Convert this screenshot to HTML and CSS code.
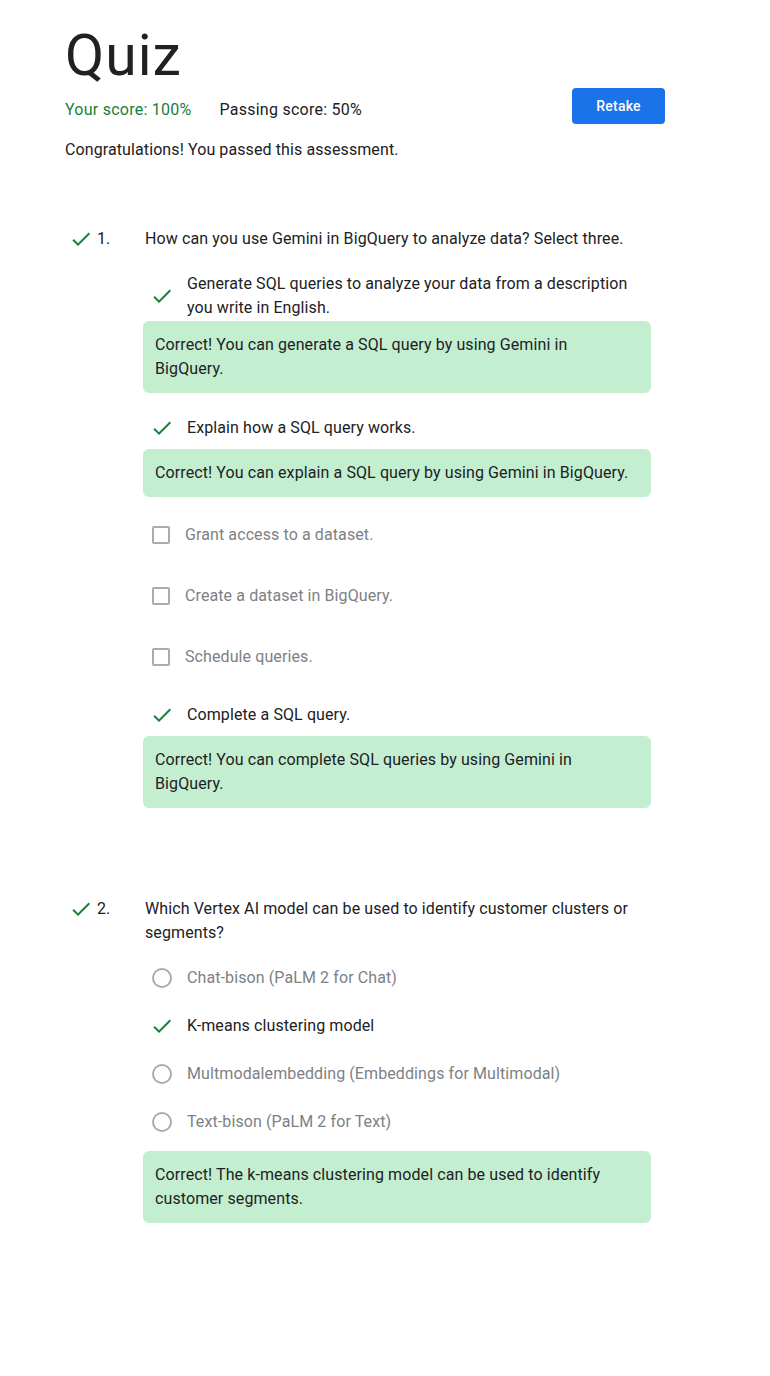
FILE: index.html
```html
<!DOCTYPE html>
<html lang="en">
<head>
<meta charset="utf-8">
<title>Quiz</title>
<link rel="stylesheet" href="styles.css">
</head>
<body>
<main class="page">
  <h1 class="title">Quiz</h1>
  <div class="score-row">
    <div class="scores">
      <span class="score-yours">Your score: 100%</span>
      <span class="score-pass">Passing score: 50%</span>
    </div>
    <button class="retake">Retake</button>
  </div>
  <p class="congrats">Congratulations! You passed this assessment.</p>

  <section class="question q1">
    <div class="q-head">
      <svg class="q-check" viewBox="0 0 24 24"><path d="M9 16.17L4.83 12l-1.42 1.41L9 19 21 7l-1.41-1.41z"/></svg>
      <span class="q-num">1.</span>
      <span class="q-text">How can you use Gemini in BigQuery to analyze data? Select three.</span>
    </div>
    <div class="options">
      <div class="opt opt-check first">
        <svg class="ico" viewBox="0 0 24 24"><path d="M9 16.17L4.83 12l-1.42 1.41L9 19 21 7l-1.41-1.41z"/></svg>
        <span class="opt-text">Generate SQL queries to analyze your data from a description you write in English.</span>
      </div>
      <div class="feedback">Correct! You can generate a SQL query by using Gemini in BigQuery.</div>

      <div class="opt opt-check">
        <svg class="ico" viewBox="0 0 24 24"><path d="M9 16.17L4.83 12l-1.42 1.41L9 19 21 7l-1.41-1.41z"/></svg>
        <span class="opt-text">Explain how a SQL query works.</span>
      </div>
      <div class="feedback">Correct! You can explain a SQL query by using Gemini in BigQuery.</div>

      <div class="opt opt-box">
        <span class="ico-wrap"><span class="checkbox"></span></span>
        <span class="opt-text muted">Grant access to a dataset.</span>
      </div>
      <div class="opt opt-box">
        <span class="ico-wrap"><span class="checkbox"></span></span>
        <span class="opt-text muted">Create a dataset in BigQuery.</span>
      </div>
      <div class="opt opt-box">
        <span class="ico-wrap"><span class="checkbox"></span></span>
        <span class="opt-text muted">Schedule queries.</span>
      </div>

      <div class="opt opt-check">
        <svg class="ico" viewBox="0 0 24 24"><path d="M9 16.17L4.83 12l-1.42 1.41L9 19 21 7l-1.41-1.41z"/></svg>
        <span class="opt-text">Complete a SQL query.</span>
      </div>
      <div class="feedback">Correct! You can complete SQL queries by using Gemini in BigQuery.</div>
    </div>
  </section>

  <section class="question q2">
    <div class="q-head">
      <svg class="q-check" viewBox="0 0 24 24"><path d="M9 16.17L4.83 12l-1.42 1.41L9 19 21 7l-1.41-1.41z"/></svg>
      <span class="q-num">2.</span>
      <span class="q-text">Which Vertex AI model can be used to identify customer clusters or segments?</span>
    </div>
    <div class="options radios">
      <div class="opt opt-radio">
        <span class="ico-wrap"><span class="radio"></span></span>
        <span class="opt-text muted">Chat-bison (PaLM 2 for Chat)</span>
      </div>
      <div class="opt opt-radio">
        <svg class="ico" viewBox="0 0 24 24"><path d="M9 16.17L4.83 12l-1.42 1.41L9 19 21 7l-1.41-1.41z"/></svg>
        <span class="opt-text">K-means clustering model</span>
      </div>
      <div class="opt opt-radio">
        <span class="ico-wrap"><span class="radio"></span></span>
        <span class="opt-text muted">Multmodalembedding (Embeddings for Multimodal)</span>
      </div>
      <div class="opt opt-radio">
        <span class="ico-wrap"><span class="radio"></span></span>
        <span class="opt-text muted">Text-bison (PaLM 2 for Text)</span>
      </div>
      <div class="feedback fb-radio">Correct! The k-means clustering model can be used to identify customer segments.</div>
    </div>
  </section>
</main>
</body>
</html>
```

FILE: styles.css
```css
* { box-sizing: border-box; }

html, body {
  margin: 0;
  padding: 0;
  background: #ffffff;
}

body {
  font-family: Roboto, "Liberation Sans", Arial, sans-serif;
  font-size: 16px;
  line-height: 24px;
  letter-spacing: 0.1px;
  color: #202124;
}

.page {
  width: 600px;
  margin-left: 65px;
  padding-top: 24px;
  padding-bottom: 80px;
}

.title {
  margin: 0;
  font-size: 57px;
  line-height: 64px;
  font-weight: 400;
  color: #202124;
  letter-spacing: 1px;
}

.score-row {
  display: flex;
  justify-content: space-between;
  align-items: flex-start;
  height: 37px;
}

.scores {
  display: flex;
  gap: 28px;
  margin-top: 10px;
  letter-spacing: 0.25px;
}

.score-yours { color: #188038; }
.score-pass { color: #202124; }

.retake {
  width: 93px;
  height: 36px;
  border: none;
  border-radius: 4px;
  background: #1a73e8;
  color: #ffffff;
  font-family: Roboto, "Liberation Sans", Arial, sans-serif;
  font-size: 14px;
  font-weight: 500;
  letter-spacing: 0.25px;
  padding: 0;
}

.congrats {
  margin: 13px 0 0;
}

.question.q1 { margin-top: 65px; }
.question.q2 { margin-top: 89px; }

.q-head {
  display: flex;
  align-items: flex-start;
}

.q-check {
  width: 24px;
  height: 24px;
  margin-left: 4px;
  fill: #188038;
  flex: none;
}

.q-num {
  width: 48px;
  margin-left: 4px;
  flex: none;
}

.q-text {
  width: 506px;
}

.options {
  margin-left: 78px;
  width: 508px;
}

.opt {
  display: flex;
  align-items: center;
  padding-left: 7px;
  margin-top: 15px;
}

.opt.first { margin-top: 21px; }

.opt-check { min-height: 40px; }
.opt-box { min-height: 46px; }

.radios .opt { margin-top: 0; }
.radios .opt:first-child { margin-top: 9px; }
.opt-radio { min-height: 48px; }

.ico {
  width: 24px;
  height: 24px;
  fill: #188038;
  flex: none;
}

.ico-wrap {
  width: 24px;
  height: 24px;
  display: flex;
  align-items: center;
  justify-content: center;
  flex: none;
}

.checkbox {
  width: 18px;
  height: 18px;
  border: 2px solid #a9abae;
  border-radius: 2px;
  margin-left: -3px;
}

.radio {
  width: 20px;
  height: 20px;
  border: 2px solid #a9abae;
  border-radius: 50%;
}

.opt-text {
  margin-left: 13px;
  flex: 1;
  padding-right: 20px;
}

.opt-box .opt-text { margin-left: 11px; }

.muted { color: #7d8185; }

.feedback {
  margin-top: 1px;
  background: #c4eed0;
  border-radius: 6px;
  padding: 12px 16px 12px 12px;
  color: #202124;
}

.feedback.fb-radio { margin-top: 5px; }
```
